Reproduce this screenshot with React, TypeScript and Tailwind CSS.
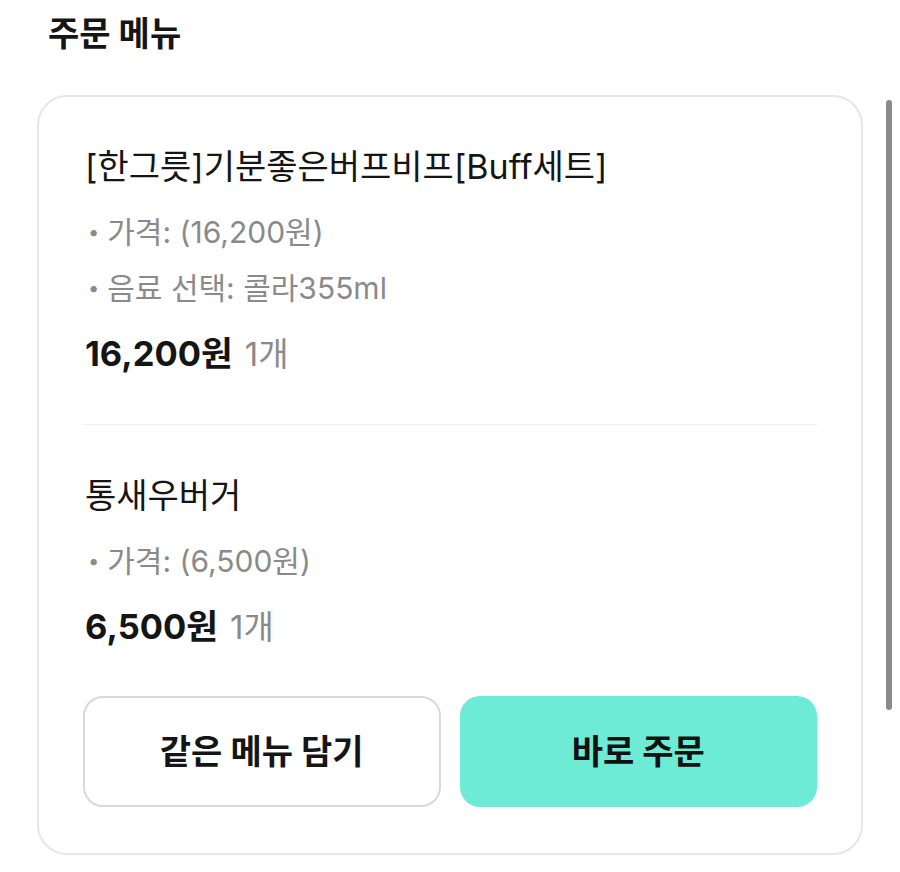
import React from 'react';

interface OrderItem {
  name: string;
  options: string[];
  price: string;
  qty: string;
}

const ITEMS: OrderItem[] = [
  {
    name: '[한그릇]기분좋은버프비프[Buff세트]',
    options: ['가격: (16,200원)', '음료 선택: 콜라355ml'],
    price: '16,200원',
    qty: '1개',
  },
  {
    name: '통새우버거',
    options: ['가격: (6,500원)'],
    price: '6,500원',
    qty: '1개',
  },
];

const FONT = { fontFamily: 'Inter, "Noto Sans CJK KR", sans-serif' };

const ItemBlock: React.FC<{ item: OrderItem; last: boolean; first: boolean }> = ({ item, last, first }) => (
  <div className={`${first ? '' : 'pt-[51px]'} ${last ? '' : 'pb-[50px] border-b border-[#f0f0f0]'}`}>
    <div className="pl-[2px]">
      <div className="text-[34px] leading-[40px] text-[#151515]">{item.name}</div>
      <ul className="mt-[17px]">
        {item.options.map((opt) => (
          <li key={opt} className="flex items-center text-[30px] leading-[56px] text-[#8a8a8a]">
            <span className="text-[20px] mr-[8px] ml-[3px]">•</span>
            {opt}
          </li>
        ))}
      </ul>
      <div className="mt-[18px] leading-[40px] flex items-baseline gap-[12px]">
        <span className="text-[34.5px] font-bold text-[#151515]">{item.price}</span>
        <span className="text-[33px] text-[#8a8a8a]">{item.qty}</span>
      </div>
    </div>
  </div>
);

export default function App() {
  return (
    <div className="relative w-[900px] h-[872px] bg-white overflow-hidden" style={FONT}>
      <h2 className="pl-[48px] pt-[14px] text-[34px] leading-[40px] font-bold text-[#151515]">주문 메뉴</h2>

      <div className="mx-[37px] mt-[41px] border-2 border-[#e6e6e6] rounded-[30px] pt-[50px] pb-[46px] pl-[44px] pr-[44px]">
        {ITEMS.map((item, i) => (
          <ItemBlock key={item.name} item={item} first={i === 0} last={i === ITEMS.length - 1} />
        ))}

        <div className="mt-[49px] grid grid-cols-2 gap-[19px]">
          <button className="h-[111px] rounded-[20px] border-2 border-[#d9d9d9] bg-white text-[34px] font-bold text-[#151515]">
            같은 메뉴 담기
          </button>
          <button className="h-[111px] rounded-[20px] bg-[#6eebd5] text-[34px] font-bold text-[#111]">
            바로 주문
          </button>
        </div>
      </div>

      <div className="absolute left-[886px] top-[100px] w-[6px] h-[610px] rounded-full bg-[#8a8a8a]" />
    </div>
  );
}
